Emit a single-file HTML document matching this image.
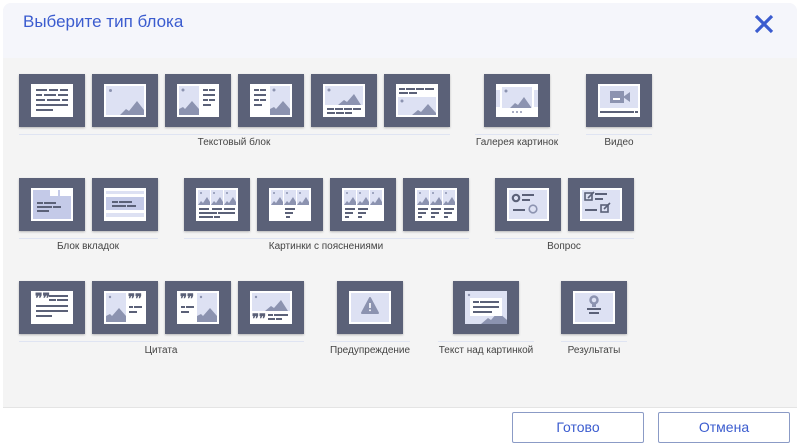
<!DOCTYPE html>
<html><head><meta charset="utf-8"><style>
*{margin:0;padding:0;box-sizing:border-box}
body{width:800px;height:448px;background:#fff;font-family:"Liberation Sans",sans-serif;position:relative;overflow:hidden}
.bg{position:absolute;left:3px;top:3px;width:794px;height:404px;background:#f4f4f4;border-radius:8px 8px 0 0}
.hd{position:absolute;left:3px;top:3px;width:794px;height:55px;background:#f5f6fb;border-radius:8px 8px 0 0}
.title{position:absolute;left:23px;top:12px;font-size:17px;color:#3b5ccf}
.t{position:absolute;width:66px;height:53px;box-shadow:0 1px 2px rgba(0,0,0,.25)}
.t svg{display:block}
.ln{position:absolute;height:1px;background:#dfe4f2}
.lb{position:absolute;font-size:10px;color:#444;text-align:center;width:200px}
.btn{position:absolute;top:412px;width:132px;height:31px;border:1px solid #8b9bc6;border-radius:2px;color:#3b5ccf;font-size:14px;text-align:center;line-height:29px;background:#fff}
.ft{position:absolute;left:3px;top:407px;width:794px;height:1px;background:#e4e4e4}
</style></head><body>
<div class="bg"></div><div class="hd"></div>
<div class="title">Выберите тип блока</div>
<svg style="position:absolute;left:754px;top:14px" width="20" height="20" viewBox="0 0 20 20"><path d="M2 2L18 18M18 2L2 18" stroke="#3b5ccf" stroke-width="3.2"/></svg>

<!-- Row 1 -->
<div class="t" style="left:19px;top:74px"><svg width="66" height="53"><rect width="66" height="53" fill="#5b6178"/><rect x="12" y="10" width="42" height="33" fill="#fff"/><g fill="#5b6178"><rect x="17" y="15" width="11" height="2"/><rect x="30" y="15" width="9" height="2"/><rect x="41" y="15" width="8" height="2"/><rect x="17" y="20" width="6" height="2"/><rect x="25" y="20" width="12" height="2"/><rect x="39" y="20" width="10" height="2"/><rect x="17" y="25" width="9" height="2"/><rect x="28" y="25" width="13" height="2"/><rect x="43" y="25" width="6" height="2"/><rect x="17" y="30" width="32" height="2"/><rect x="17" y="35" width="17" height="2"/></g></svg></div>
<div class="t" style="left:92px;top:74px"><svg width="66" height="53"><rect width="66" height="53" fill="#5b6178"/><rect x="12" y="10" width="42" height="33" fill="#fff"/><rect x="14" y="12" width="38" height="29" fill="#dde1f3"/><circle cx="18.5" cy="16.5" r="1.5" fill="#8c93b0"/><path d="M28 41L34 35L37 37L45 27L52 36L52 41Z" fill="#8c93b0"/></svg></div>
<div class="t" style="left:165px;top:74px"><svg width="66" height="53"><rect width="66" height="53" fill="#5b6178"/><rect x="12" y="10" width="42" height="33" fill="#fff"/><rect x="14" y="12" width="20" height="29" fill="#dde1f3"/><circle cx="18" cy="16" r="1.5" fill="#8c93b0"/><path d="M14 41L14 35L18 33L20 35L27 27L34 35L34 41Z" fill="#8c93b0"/><g fill="#5b6178"><rect x="38" y="15" width="5" height="2"/><rect x="44" y="15" width="6" height="2"/><rect x="38" y="20" width="12" height="2"/><rect x="38" y="25" width="5" height="2"/><rect x="44" y="25" width="6" height="2"/><rect x="38" y="30" width="8" height="2"/></g></svg></div>
<div class="t" style="left:238px;top:74px"><svg width="66" height="53"><rect width="66" height="53" fill="#5b6178"/><rect x="12" y="10" width="42" height="33" fill="#fff"/><rect x="32" y="12" width="20" height="29" fill="#dde1f3"/><circle cx="36" cy="16" r="1.5" fill="#8c93b0"/><path d="M32 41L32 35L36 33L38 35L45 27L52 35L52 41Z" fill="#8c93b0"/><g fill="#5b6178"><rect x="16" y="15" width="5" height="2"/><rect x="22" y="15" width="6" height="2"/><rect x="16" y="20" width="12" height="2"/><rect x="16" y="25" width="5" height="2"/><rect x="22" y="25" width="6" height="2"/><rect x="16" y="30" width="8" height="2"/></g></svg></div>
<div class="t" style="left:311px;top:74px"><svg width="66" height="53"><rect width="66" height="53" fill="#5b6178"/><rect x="12" y="10" width="42" height="33" fill="#fff"/><rect x="14" y="12" width="38" height="19" fill="#dde1f3"/><circle cx="18" cy="16" r="1.5" fill="#8c93b0"/><path d="M27 31L33 26L36 28L43 20L50 31Z" fill="#8c93b0"/><g fill="#5b6178"><rect x="16" y="34" width="7" height="2"/><rect x="24" y="34" width="8" height="2"/><rect x="33" y="34" width="8" height="2"/><rect x="42" y="34" width="8" height="2"/><rect x="16" y="38" width="8" height="2"/><rect x="25" y="38" width="8" height="2"/><rect x="34" y="38" width="7" height="2"/></g></svg></div>
<div class="t" style="left:384px;top:74px"><svg width="66" height="53"><rect width="66" height="53" fill="#5b6178"/><rect x="12" y="10" width="42" height="33" fill="#fff"/><g fill="#5b6178"><rect x="15" y="14" width="6" height="2"/><rect x="22" y="14" width="9" height="2"/><rect x="32" y="14" width="8" height="2"/><rect x="41" y="14" width="9" height="2"/><rect x="15" y="18" width="9" height="2"/><rect x="25" y="18" width="8" height="2"/></g><rect x="14" y="23" width="38" height="18" fill="#dde1f3"/><circle cx="18" cy="27" r="1.5" fill="#8c93b0"/><path d="M28 41L34 36L37 38L44 30L52 39L52 41Z" fill="#8c93b0"/></svg></div>
<div class="ln" style="left:19px;top:134px;width:431px"></div>
<div class="lb" style="left:134px;top:137px">Текстовый блок</div>

<div class="t" style="left:484px;top:74px"><svg width="66" height="53"><rect width="66" height="53" fill="#5b6178"/><rect x="12" y="10" width="42" height="33" fill="#fff"/><rect x="12" y="16" width="4" height="17" fill="#dde1f3"/><rect x="50" y="16" width="4" height="17" fill="#dde1f3"/><rect x="18" y="13" width="30" height="21" fill="#dde1f3"/><circle cx="22" cy="17" r="1.5" fill="#8c93b0"/><path d="M26 34L31 29L34 31L40 23L47 33L47 34Z" fill="#8c93b0"/><g fill="#8c93b0"><circle cx="29" cy="38" r="1"/><circle cx="33" cy="38" r="1"/><circle cx="37" cy="38" r="1"/></g></svg></div>
<div class="ln" style="left:475px;top:134px;width:84px"></div>
<div class="lb" style="left:417px;top:137px">Галерея картинок</div>

<div class="t" style="left:586px;top:74px"><svg width="66" height="53"><rect width="66" height="53" fill="#5b6178"/><rect x="12" y="10" width="42" height="33" fill="#fff"/><rect x="14" y="12" width="38" height="22" fill="#dde1f3"/><rect x="24" y="17" width="14" height="12" fill="#8c93b0"/><path d="M37 23L44 18L44 28Z" fill="#8c93b0"/><rect x="27" y="24" width="7" height="2" fill="#fff"/><rect x="14" y="37" width="34" height="2" fill="#5b6178"/><rect x="49" y="37" width="3" height="2" fill="#5b6178"/></svg></div>
<div class="ln" style="left:586px;top:134px;width:66px"></div>
<div class="lb" style="left:519px;top:137px">Видео</div>

<!-- Row 2 -->
<div class="t" style="left:19px;top:178px"><svg width="66" height="53"><rect width="66" height="53" fill="#5b6178"/><rect x="12" y="10" width="42" height="33" fill="#fff"/><rect x="14" y="12" width="38" height="29" fill="#c4cae8"/><rect x="31" y="12" width="8" height="6" fill="#fff"/><rect x="41" y="12" width="11" height="6" fill="#fff"/><g fill="#5b6178"><rect x="18" y="24" width="6" height="2"/><rect x="25" y="24" width="12" height="2"/><rect x="18" y="28" width="15" height="2"/><rect x="34" y="28" width="8" height="2"/><rect x="18" y="32" width="12" height="2"/></g></svg></div>
<div class="t" style="left:92px;top:178px"><svg width="66" height="53"><rect width="66" height="53" fill="#5b6178"/><rect x="12" y="10" width="42" height="33" fill="#fff"/><rect x="14" y="13" width="38" height="3" fill="#dde1f3"/><rect x="14" y="19" width="38" height="13" fill="#c4cae8"/><rect x="14" y="35" width="38" height="4" fill="#dde1f3"/><g fill="#5b6178"><rect x="20" y="23" width="6" height="2"/><rect x="27" y="23" width="13" height="2"/><rect x="20" y="27" width="14" height="2"/><rect x="35" y="27" width="9" height="2"/></g></svg></div>
<div class="ln" style="left:19px;top:201px;width:0"></div>
<div class="ln" style="left:19px;top:238px;width:139px"></div>
<div class="lb" style="left:-12px;top:241px">Блок вкладок</div>

<div class="t" style="left:184px;top:178px"><svg width="66" height="53"><rect width="66" height="53" fill="#5b6178"/><rect x="12" y="10" width="42" height="33" fill="#fff"/><g fill="#dde1f3"><rect x="14" y="12" width="12" height="15"/><rect x="27" y="12" width="12" height="15"/><rect x="40" y="12" width="12" height="15"/></g><g fill="#8c93b0"><path d="M14 27L17 23L19 25L23 19L26 24L26 27Z"/><path d="M27 27L30 23L32 25L36 19L39 24L39 27Z"/><path d="M40 27L43 23L45 25L49 19L52 24L52 27Z"/><circle cx="17" cy="15" r="1"/><circle cx="30" cy="15" r="1"/><circle cx="43" cy="15" r="1"/></g><g fill="#5b6178"><rect x="15" y="30" width="10" height="2"/><rect x="28" y="30" width="10" height="2"/><rect x="40" y="30" width="11" height="2"/><rect x="15" y="34" width="18" height="2"/><rect x="34" y="34" width="17" height="2"/><rect x="15" y="38" width="14" height="2"/><rect x="30" y="38" width="6" height="2"/></g></svg></div>
<div class="t" style="left:257px;top:178px"><svg width="66" height="53"><rect width="66" height="53" fill="#5b6178"/><rect x="12" y="10" width="42" height="33" fill="#fff"/><g fill="#dde1f3"><rect x="14" y="12" width="12" height="15"/><rect x="27" y="12" width="12" height="15"/><rect x="40" y="12" width="12" height="15"/></g><g fill="#8c93b0"><path d="M14 27L17 23L19 25L23 19L26 24L26 27Z"/><path d="M27 27L30 23L32 25L36 19L39 24L39 27Z"/><path d="M40 27L43 23L45 25L49 19L52 24L52 27Z"/><circle cx="17" cy="15" r="1"/><circle cx="30" cy="15" r="1"/><circle cx="43" cy="15" r="1"/></g><g fill="#5b6178"><rect x="28" y="30" width="10" height="2"/><rect x="28" y="34" width="8" height="2"/><rect x="29" y="38" width="4" height="2"/></g></svg></div>
<div class="t" style="left:330px;top:178px"><svg width="66" height="53"><rect width="66" height="53" fill="#5b6178"/><rect x="12" y="10" width="42" height="33" fill="#fff"/><g fill="#dde1f3"><rect x="14" y="12" width="12" height="15"/><rect x="27" y="12" width="12" height="15"/><rect x="40" y="12" width="12" height="15"/></g><g fill="#8c93b0"><path d="M14 27L17 23L19 25L23 19L26 24L26 27Z"/><path d="M27 27L30 23L32 25L36 19L39 24L39 27Z"/><path d="M40 27L43 23L45 25L49 19L52 24L52 27Z"/><circle cx="17" cy="15" r="1"/><circle cx="30" cy="15" r="1"/><circle cx="43" cy="15" r="1"/></g><g fill="#5b6178"><rect x="15" y="30" width="10" height="2"/><rect x="28" y="30" width="10" height="2"/><rect x="15" y="34" width="8" height="2"/><rect x="28" y="34" width="8" height="2"/><rect x="15" y="38" width="4" height="2"/><rect x="28" y="38" width="4" height="2"/></g></svg></div>
<div class="t" style="left:403px;top:178px"><svg width="66" height="53"><rect width="66" height="53" fill="#5b6178"/><rect x="12" y="10" width="42" height="33" fill="#fff"/><g fill="#dde1f3"><rect x="14" y="12" width="12" height="15"/><rect x="27" y="12" width="12" height="15"/><rect x="40" y="12" width="12" height="15"/></g><g fill="#8c93b0"><path d="M14 27L17 23L19 25L23 19L26 24L26 27Z"/><path d="M27 27L30 23L32 25L36 19L39 24L39 27Z"/><path d="M40 27L43 23L45 25L49 19L52 24L52 27Z"/><circle cx="17" cy="15" r="1"/><circle cx="30" cy="15" r="1"/><circle cx="43" cy="15" r="1"/></g><g fill="#5b6178"><rect x="15" y="30" width="10" height="2"/><rect x="28" y="30" width="10" height="2"/><rect x="41" y="30" width="10" height="2"/><rect x="15" y="34" width="8" height="2"/><rect x="28" y="34" width="8" height="2"/><rect x="41" y="34" width="8" height="2"/><rect x="15" y="38" width="4" height="2"/><rect x="28" y="38" width="4" height="2"/><rect x="41" y="38" width="4" height="2"/></g></svg></div>
<div class="ln" style="left:184px;top:238px;width:285px"></div>
<div class="lb" style="left:226px;top:241px">Картинки с пояснениями</div>

<div class="t" style="left:495px;top:178px"><svg width="66" height="53"><rect width="66" height="53" fill="#5b6178"/><rect x="12" y="10" width="42" height="33" fill="#fff"/><rect x="14" y="12" width="38" height="29" fill="#dde1f3"/><circle cx="21" cy="20" r="3.2" fill="none" stroke="#5b6178" stroke-width="2.2"/><rect x="27" y="16" width="12" height="2" fill="#5b6178"/><rect x="27" y="21" width="8" height="2" fill="#5b6178"/><rect x="18" y="31" width="12" height="2" fill="#5b6178"/><circle cx="38" cy="31" r="3.8" fill="none" stroke="#8c93b0" stroke-width="1.6"/></svg></div>
<div class="t" style="left:568px;top:178px"><svg width="66" height="53"><rect width="66" height="53" fill="#5b6178"/><rect x="12" y="10" width="42" height="33" fill="#fff"/><rect x="14" y="12" width="38" height="29" fill="#dde1f3"/><rect x="17" y="15" width="7" height="7" fill="none" stroke="#5b6178" stroke-width="1.6"/><path d="M20 20L26 14" stroke="#5b6178" stroke-width="1.6"/><rect x="27" y="15" width="12" height="2" fill="#5b6178"/><rect x="27" y="20" width="8" height="2" fill="#5b6178"/><rect x="17" y="31" width="12" height="2" fill="#5b6178"/><rect x="33" y="27" width="7" height="7" fill="none" stroke="#5b6178" stroke-width="1.6"/><path d="M36 31L42 25" stroke="#5b6178" stroke-width="1.6"/></svg></div>
<div class="ln" style="left:495px;top:238px;width:139px"></div>
<div class="lb" style="left:464px;top:241px">Вопрос</div>

<!-- Row 3 -->
<div class="t" style="left:19px;top:281px"><svg width="66" height="53"><rect width="66" height="53" fill="#5b6178"/><rect x="12" y="10" width="42" height="33" fill="#fff"/><text x="16" y="22" font-family="Liberation Serif" font-weight="bold" font-size="14" fill="#5b6178">❞❞</text><g fill="#5b6178"><rect x="30" y="14" width="19" height="2"/><rect x="30" y="18" width="7" height="2"/><rect x="38" y="18" width="11" height="2"/><rect x="17" y="24" width="32" height="2"/><rect x="17" y="29" width="32" height="2"/><rect x="17" y="34" width="16" height="2"/></g></svg></div>
<div class="t" style="left:92px;top:281px"><svg width="66" height="53"><rect width="66" height="53" fill="#5b6178"/><rect x="12" y="10" width="42" height="33" fill="#fff"/><rect x="14" y="12" width="20" height="29" fill="#dde1f3"/><circle cx="18" cy="16" r="1.2" fill="#8c93b0"/><path d="M14 41L14 35L18 33L20 35L27 27L34 35L34 41Z" fill="#8c93b0"/><text x="36" y="22" font-family="Liberation Serif" font-weight="bold" font-size="13" fill="#5b6178">❞❞</text><g fill="#5b6178"><rect x="37" y="25" width="4" height="2"/><rect x="42" y="25" width="8" height="2"/><rect x="37" y="30" width="8" height="2"/></g></svg></div>
<div class="t" style="left:165px;top:281px"><svg width="66" height="53"><rect width="66" height="53" fill="#5b6178"/><rect x="12" y="10" width="42" height="33" fill="#fff"/><rect x="32" y="12" width="20" height="29" fill="#dde1f3"/><circle cx="36" cy="16" r="1.2" fill="#8c93b0"/><path d="M32 41L32 35L36 33L38 35L45 27L52 35L52 41Z" fill="#8c93b0"/><text x="15" y="22" font-family="Liberation Serif" font-weight="bold" font-size="13" fill="#5b6178">❞❞</text><g fill="#5b6178"><rect x="16" y="25" width="4" height="2"/><rect x="21" y="25" width="8" height="2"/><rect x="16" y="30" width="8" height="2"/></g></svg></div>
<div class="t" style="left:238px;top:281px"><svg width="66" height="53"><rect width="66" height="53" fill="#5b6178"/><rect x="12" y="10" width="42" height="33" fill="#fff"/><rect x="14" y="12" width="38" height="18" fill="#dde1f3"/><circle cx="18" cy="16" r="1.2" fill="#8c93b0"/><path d="M27 30L33 25L36 27L43 19L50 30Z" fill="#8c93b0"/><text x="14" y="42" font-family="Liberation Serif" font-weight="bold" font-size="13" fill="#5b6178">❞❞</text><g fill="#5b6178"><rect x="30" y="33" width="5" height="2"/><rect x="36" y="33" width="14" height="2"/><rect x="30" y="37" width="7" height="2"/><rect x="38" y="37" width="6" height="2"/></g></svg></div>
<div class="ln" style="left:19px;top:341px;width:285px"></div>
<div class="lb" style="left:61px;top:345px">Цитата</div>

<div class="t" style="left:337px;top:281px"><svg width="66" height="53"><rect width="66" height="53" fill="#5b6178"/><rect x="12" y="10" width="42" height="33" fill="#fff"/><rect x="14" y="12" width="38" height="29" fill="#dde1f3"/><path d="M33 17L41 32L25 32Z" fill="#8c93b0" stroke="#8c93b0" stroke-width="2" stroke-linejoin="round"/><rect x="32.2" y="22" width="1.6" height="5" fill="#fff"/><rect x="32.2" y="28.5" width="1.6" height="1.6" fill="#fff"/></svg></div>
<div class="ln" style="left:330px;top:341px;width:80px"></div>
<div class="lb" style="left:270px;top:345px">Предупреждение</div>

<div class="t" style="left:453px;top:281px"><svg width="66" height="53"><rect width="66" height="53" fill="#5b6178"/><rect x="12" y="10" width="42" height="33" fill="#dde1f3"/><circle cx="16" cy="14" r="1.2" fill="#8c93b0"/><path d="M28 43L35 37L38 39L45 31L54 39L54 43Z" fill="#8c93b0"/><rect x="17" y="17" width="32" height="18" fill="#fff"/><g fill="#5b6178"><rect x="20" y="20" width="6" height="2"/><rect x="27" y="20" width="19" height="2"/><rect x="20" y="25" width="26" height="2"/><rect x="20" y="30" width="19" height="2"/></g></svg></div>
<div class="ln" style="left:438px;top:341px;width:96px"></div>
<div class="lb" style="left:386px;top:345px">Текст над картинкой</div>

<div class="t" style="left:561px;top:281px"><svg width="66" height="53"><rect width="66" height="53" fill="#5b6178"/><rect x="12" y="10" width="42" height="33" fill="#fff"/><rect x="14" y="12" width="38" height="29" fill="#dde1f3"/><circle cx="33" cy="19" r="3.5" fill="none" stroke="#8c93b0" stroke-width="2.5"/><rect x="31" y="23" width="4" height="3" fill="#8c93b0"/><rect x="26" y="27" width="14" height="2" fill="#5b6178"/><rect x="28" y="31" width="10" height="2" fill="#5b6178"/></svg></div>
<div class="ln" style="left:561px;top:341px;width:66px"></div>
<div class="lb" style="left:494px;top:345px">Результаты</div>

<div class="ft"></div>
<div class="btn" style="left:512px">Готово</div>
<div class="btn" style="left:658px">Отмена</div>
</body></html>
